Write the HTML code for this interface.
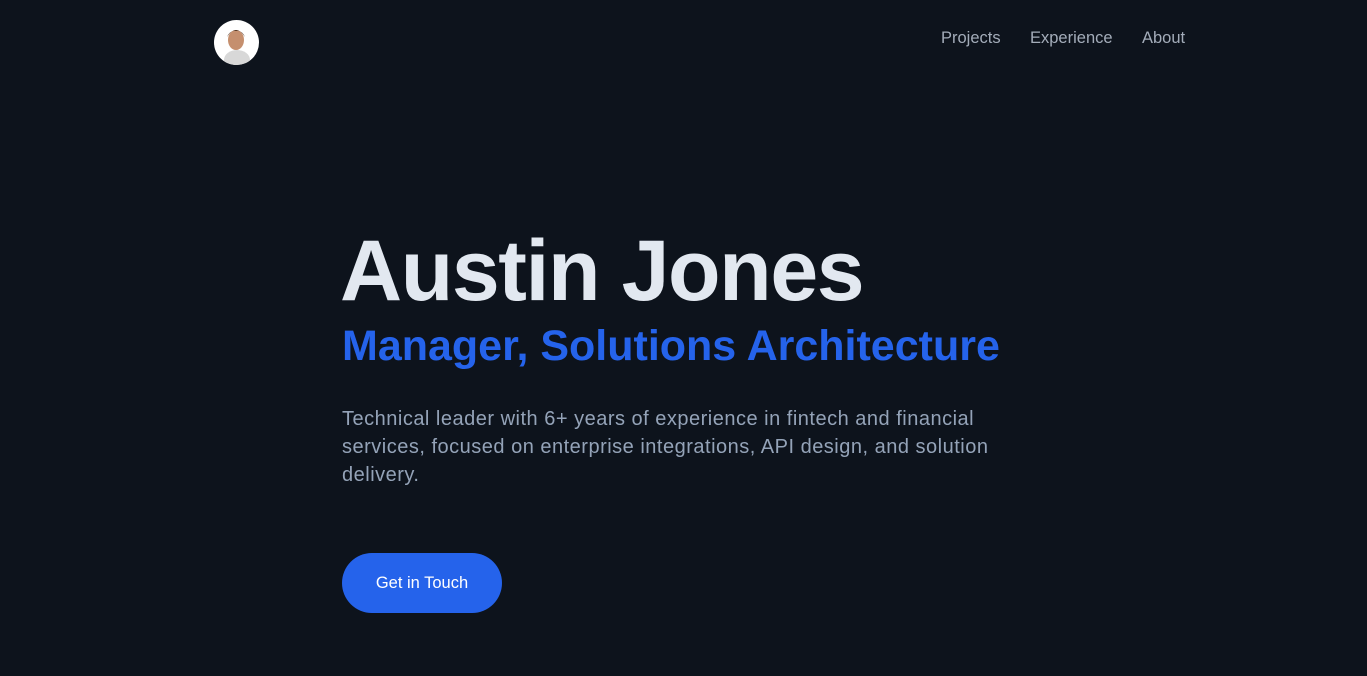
<!DOCTYPE html>
<html><head><style>
body{margin:0;background:#0d131c;width:1367px;height:676px;overflow:hidden;font-family:"Liberation Sans",sans-serif;}
.av{position:absolute;left:214px;top:20px;width:45px;height:45px;border-radius:50%;background:#fff;overflow:hidden}
nav{position:absolute;top:29px;font-size:16.5px;color:#a3acb9}
nav span{position:absolute;white-space:nowrap}
h1{position:absolute;left:340px;top:222px;margin:0;font-size:86px;font-weight:700;color:#e2e8f0;letter-spacing:-1.4px}
h2{position:absolute;left:342px;top:322px;margin:0;font-size:43px;font-weight:700;color:#2563eb;letter-spacing:0px}
p{position:absolute;left:342px;top:405px;margin:0;width:700px;font-size:20px;line-height:28px;color:#94a3b8;letter-spacing:0.5px}
.btn{position:absolute;left:342px;top:553px;width:160px;height:60px;border-radius:30px;background:#2563eb;color:#fff;font-size:16.5px;text-align:center;line-height:60px}
</style></head><body>
<div class="av"><svg width="45" height="45"><ellipse cx="23" cy="40" rx="13" ry="10" fill="#d8d8d8"/><ellipse cx="22" cy="20" rx="8" ry="10" fill="#c58f6e"/><path d="M13 17 Q22 3 31 17 Q28 10 22 11 Q16 10 13 17Z" fill="#4a2f1e"/></svg></div>
<nav><span style="left:941px">Projects</span><span style="left:1030px">Experience</span><span style="left:1142px">About</span></nav>
<h1>Austin Jones</h1>
<h2>Manager, Solutions Architecture</h2>
<p>Technical leader with 6+ years of experience in fintech and financial services, focused on enterprise integrations, API design, and solution delivery.</p>
<div class="btn">Get in Touch</div>
</body></html>
